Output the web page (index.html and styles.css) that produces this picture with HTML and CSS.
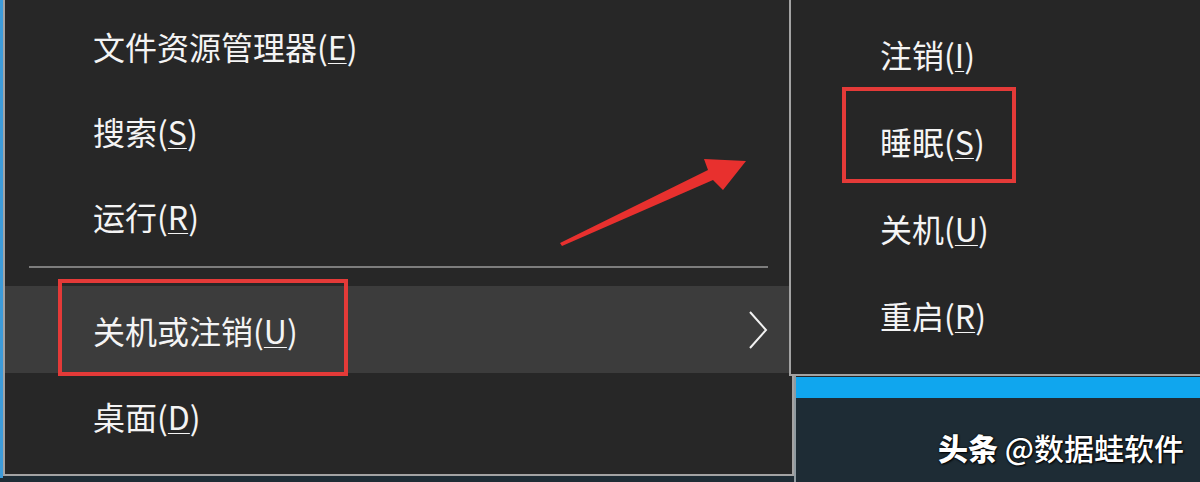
FILE: index.html
```html
<!DOCTYPE html>
<html lang="zh-CN">
  <head>
    <meta charset="utf-8">
    <meta name="viewport" content="width=device-width, initial-scale=1">
    <title>关机或注销</title>
    <link rel="stylesheet" href="styles.css">
  </head>
  <body>
    <div class='screen'>
        <div class='strip'></div>
        <div class='menu'>
            <div class='item'><span>文件资源管理器(<u>E</u>)</span></div>
            <div class='item'><span>搜索(<u>S</u>)</span></div>
            <div class='item'><span>运行(<u>R</u>)</span></div>
            <div class='sep'></div>
            <div class='item active'>
                <span>关机或注销(<u>U</u>)</span>
                <svg class='chevron' width='20' height='40' viewBox='0 0 20 40'>
                    <polyline points='2,2 18,20 2,38' fill='none' stroke='#f2f2f2' stroke-width='2'/>
                </svg>
            </div>
            <div class='item'><span>桌面(<u>D</u>)</span></div>
        </div>
        <div class='desk'>
            <div class='desk-top'></div>
            <div class='accent'></div>
            <div class='panel'></div>
        </div>
        <div class='submenu'>
            <div class='sub-item'>注销(<u>I</u>)</div>
            <div class='sub-item'>睡眠(<u>S</u>)</div>
            <div class='sub-item'>关机(<u>U</u>)</div>
            <div class='sub-item'>重启(<u>R</u>)</div>
        </div>
        <div class='mark mark-main'></div>
        <div class='mark mark-sub'></div>
        <svg class='arrow' viewBox='0 0 1200 482' width='1200' height='482'>
            <polygon points='560,243 708,170 704,159 746,161 723,190 713,180 562,246' fill='#e8302e'/>
        </svg>
        <div class='watermark'><b>头条</b> @数据蛙软件</div>
    </div>
  </body>
</html>
```
FILE: styles.css
```css
body {
    margin: 0;
    background-color: #1e2c35;
    font-family: "Noto Sans CJK SC", "Noto Sans", sans-serif;
    color: #f4f4f4;
}
.screen {
    position: relative;
    display: flex;
    width: 1200px;
    height: 482px;
    overflow: hidden;
}
.strip {
    width: 3px;
    height: 478px;
    background-color: #3d9bd9;
}
.menu {
    width: 791px;
    height: 476px;
    padding-top: 3px;
    box-sizing: border-box;
    background-color: #272727;
    border: 2px solid #a3a3a3;
    border-top: none;
    display: flex;
    flex-direction: column;
}
.item {
    height: 85px;
    flex-shrink: 0;
    display: flex;
    align-items: center;
    justify-content: space-between;
    padding-left: 88px;
    padding-right: 24px;
    font-size: 32px;
    line-height: 1;
}
.item u, .sub-item u {
    text-decoration-thickness: 1px;
    text-underline-offset: 3px;
}
.sep {
    flex-shrink: 0;
    margin: 8px 24px 0;
    box-sizing: border-box;
    border-top: 2px solid #7d7d7d;
    height: 19px;
}
.active {
    height: 87px;
    margin-top: 1px;
    background-color: #3c3c3c;
}
.chevron {
    display: block;
}
.desk {
    flex: 1;
    display: flex;
    flex-direction: column;
    border-left: 2px solid #8f9aa0;
}
.desk-top {
    height: 377px;
    background-color: #262626;
}
.accent {
    height: 21px;
    background-color: #10a6ee;
}
.panel {
    flex: 1;
    background-color: #1e2c35;
}
.submenu {
    position: absolute;
    top: 0;
    left: 789px;
    width: 411px;
    height: 376px;
    padding-top: 10px;
    box-sizing: border-box;
    background-color: #262626;
    border-left: 2px solid #a3a3a3;
    border-bottom: 2px solid #a3a3a3;
}
.sub-item {
    height: 87px;
    display: flex;
    align-items: center;
    padding-left: 89px;
    font-size: 32px;
    line-height: 1;
}
.mark {
    position: absolute;
    box-sizing: border-box;
    border: 4px solid #e43a38;
}
.mark-main {
    left: 58px;
    top: 279px;
    width: 290px;
    height: 97px;
}
.mark-sub {
    left: 842px;
    top: 87px;
    width: 174px;
    height: 96px;
}
.arrow {
    position: absolute;
    top: 0;
    left: 0;
    pointer-events: none;
}
.watermark {
    position: absolute;
    right: 16px;
    top: 428px;
    font-size: 30px;
    line-height: 38px;
    font-weight: 500;
    color: #ffffff;
    text-shadow: 1px 1px 2px #000000, 0 0 2px #000000;
}
.watermark b {
    font-weight: 900;
}
```
